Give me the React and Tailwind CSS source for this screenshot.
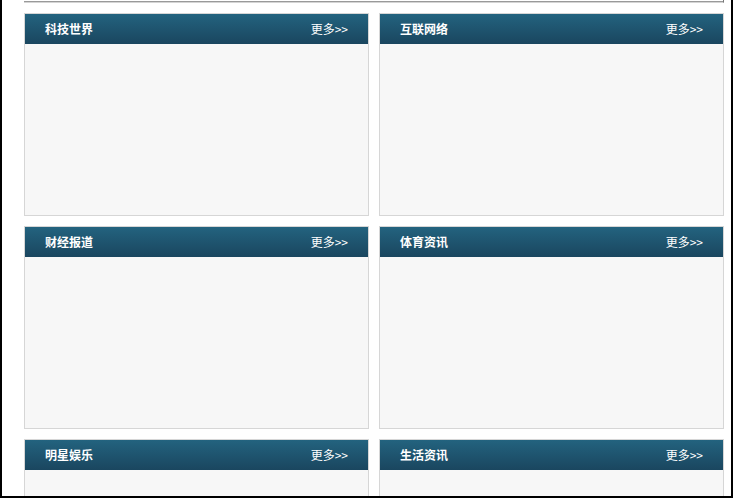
import React from "react"

const sections = ["科技世界", "互联网络", "财经报道", "体育资讯", "明星娱乐", "生活资讯"]

function Panel({ title }) {
  return (
    <div className="h-[203px] border border-[#d6d6d6] bg-[#f7f7f7]">
      <div className="flex h-[30px] items-center justify-between bg-gradient-to-b from-[#23637f] to-[#1a465f] pl-[20px] pr-[20px] text-[12px] text-white">
        <span className="font-bold">{title}</span>
        <a href="#" className="leading-none">更多&gt;&gt;</a>
      </div>
    </div>
  )
}

export default function App() {
  return (
    <div
      className="h-[498px] w-[733px] overflow-hidden border-x-2 border-b-2 border-black bg-white"
      style={{ fontFamily: '"SimSun", "Noto Sans CJK SC", sans-serif' }}
    >
      <div className="ml-[22px] w-[700px]">
        <div className="h-[3px] border-b border-r border-b-[#d4d4d4] border-r-[#777] shadow-[0_-1px_0_#999_inset]" />
        <div className="mt-[10px] grid grid-cols-[345px_345px] gap-[10px]">
          {sections.map(s => (
            <Panel key={s} title={s} />
          ))}
        </div>
      </div>
    </div>
  )
}
